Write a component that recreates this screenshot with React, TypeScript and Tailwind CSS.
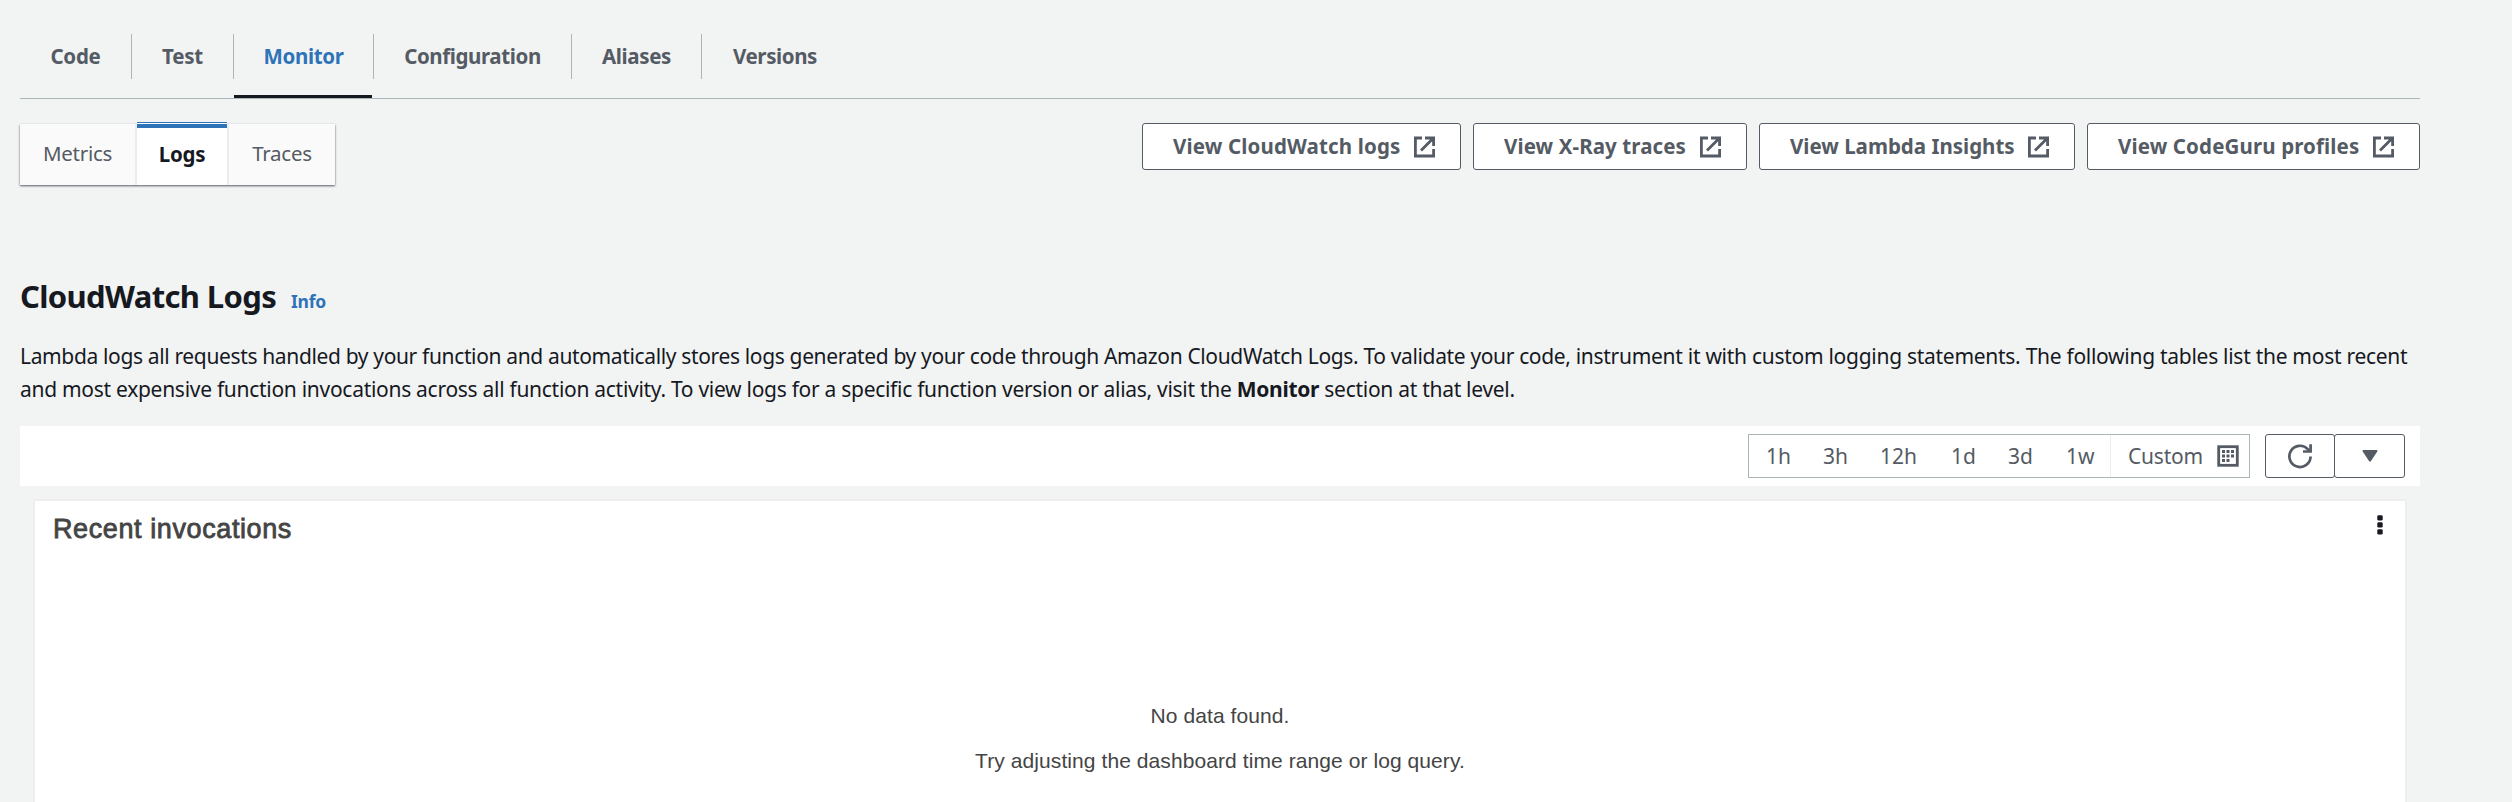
import React from "react";

const tabs = [
  { label: "Code", box: "w-[112px] tracking-[-0.25px]" },
  { label: "Test", box: "w-[102px] tracking-[-0.25px]" },
  { label: "Monitor", box: "w-[140px] tracking-[-0.35px]" },
  { label: "Configuration", box: "w-[198px] tracking-[-0.4px]" },
  { label: "Aliases", box: "w-[130px] tracking-[-0.35px]" },
  { label: "Versions", box: "w-[146px] tracking-[-0.4px]" },
];

const links = [
  { label: "View CloudWatch logs", box: "w-[319px] tracking-[0.15px]" },
  { label: "View X-Ray traces", box: "w-[274px] tracking-[0.1px]" },
  { label: "View Lambda Insights", box: "w-[316px]" },
  { label: "View CodeGuru profiles", box: "w-[333px] tracking-[0.13px]" },
];

const ranges = [
  { label: "1h", box: "w-[57px]" },
  { label: "3h", box: "w-[57px]" },
  { label: "12h", box: "w-[71px]" },
  { label: "1d", box: "w-[57px]" },
  { label: "3d", box: "w-[58px]" },
  { label: "1w", box: "w-[44px]" },
];

function ExternalIcon() {
  return (
    <svg className="h-[24px] w-[24px] shrink-0" viewBox="0 0 24 24" fill="none" stroke="#545b64" strokeWidth="2.8">
      <path d="M10 3H3.4V21H21.6V14" />
      <path d="M13 3H21.6V11M21 3.5L9 15.5" />
    </svg>
  );
}

function CalendarIcon() {
  return (
    <svg className="h-[22px] w-[22px]" viewBox="0 0 22 22" fill="none">
      <rect x="1.7" y="1.7" width="18.6" height="18.6" stroke="#545b64" strokeWidth="2.8" />
      <path d="M5 6.5h12M5 11h12M5 15.5h8" stroke="#545b64" strokeWidth="3" strokeDasharray="3 1.5" />
    </svg>
  );
}

function RefreshIcon() {
  return (
    <svg className="h-[26px] w-[26px]" viewBox="0 0 26 26" fill="none" stroke="#545b64" strokeWidth="2.7">
      <path d="M23.6 13.5A10.6 10.6 0 1 1 20.8 6.2L22.5 8.2" />
      <path d="M23.6 1.2V8.5H16" />
    </svg>
  );
}

export default function App() {
  return (
    <div className="h-[802px] w-[2512px] overflow-hidden bg-[#f2f3f3] pl-5 pr-[92px] font-['Noto_Sans','Open_Sans',sans-serif] text-[#16191f]">
      <nav className="flex h-[99px] border-b border-[#aab7b8] pt-[34px]">
        {tabs.map((t, i) => (
          <div key={t.label} className={`${t.box} flex h-[64px] flex-col justify-between`}>
            <div className={`flex h-[45px] items-center justify-center text-[20.5px] font-bold ${i < 5 ? "border-r border-[#aab7b8]" : ""} ${t.label === "Monitor" ? "text-[#2e73b8]" : "text-[#545b64]"}`}>
              {t.label}
            </div>
            {t.label === "Monitor" && <div className="h-[3px] w-[138px] bg-[#16191f]" />}
          </div>
        ))}
      </nav>
      <div className="flex h-[87px] items-start justify-between pt-6">
        <div className="mt-px flex h-[61px] w-[315px] bg-[#fafafa] text-[20.5px] tracking-[-0.25px] text-[#545b64] shadow-[0_1px_2px_#545b64]">
          <div className="flex w-[117px] items-center justify-center border-r-2 border-[#eaeded] pb-0.5">Metrics</div>
          <div className="-mt-0.5 flex h-[63px] w-[90px] flex-col border-t border-[#2e73b8] bg-white font-bold text-[#16191f]">
            <div className="mt-px h-1 bg-[#2e73b8]" />
            <div className="flex flex-1 items-center justify-center pb-[5px]">Logs</div>
          </div>
          <div className="flex w-[108px] items-center justify-center border-l-2 border-[#eaeded] pb-0.5">Traces</div>
        </div>
        <div className="flex gap-3">
          {links.map((l) => (
            <button key={l.label} className={`${l.box} flex h-[47px] items-center justify-between rounded-[3px] border border-[#545b64] bg-white pl-[30px] pr-[24px] text-[20.5px] font-bold text-[#545b64]`}>
              {l.label}
              <ExternalIcon />
            </button>
          ))}
        </div>
      </div>
      <div className="mt-[88px] flex h-[44px] items-baseline gap-[15px]">
        <h1 className="text-[31px] font-bold leading-[44px] tracking-[-0.64px]">CloudWatch Logs</h1>
        <a className="text-[17.5px] font-bold tracking-[-0.3px] text-[#2e73b8]">Info</a>
      </div>
      <p className="mt-[22px] h-[86px] whitespace-nowrap text-[21px] leading-[33px] tracking-[-0.328px]">
        <span className="tracking-[-0.355px]">
          Lambda logs all requests handled by your function and automatically stores logs generated by your code through Amazon CloudWatch Logs. To validate your code,
        </span>{" "}
        <span className="tracking-[-0.28px]">
          instrument it with custom logging statements. The following tables list the most recent
        </span>
        <br />
        <span className="tracking-[-0.285px]">
          and most expensive function invocations across all function activity. To view logs for a specific function version or alias, visit the <b>Monitor</b> section at that level.
        </span>
      </p>
      <div className="flex h-[60px] items-center justify-end bg-white pr-[15px] text-[21px] text-[#545b64]">
        <div className="flex h-[44px] w-[502px] border border-[#aab7b8]">
          <div className="flex w-[362px] items-center border-r border-[#eaeded] pl-[17px] pt-0.5">
            {ranges.map((r) => (
              <span key={r.label} className={r.box}>
                {r.label}
              </span>
            ))}
          </div>
          <div className="flex flex-1 items-center justify-between pl-[17px] pr-[10px]">
            <span className="pt-0.5 tracking-[-0.2px]">Custom</span>
            <CalendarIcon />
          </div>
        </div>
        <div className="ml-[15px] flex h-[44px]">
          <button className="flex w-[70px] items-center justify-center rounded-[3px] border border-[#545b64]">
            <RefreshIcon />
          </button>
          <button className="-ml-px flex w-[71px] items-center justify-center rounded-[3px] border border-[#545b64]">
            <svg className="h-[12px] w-[16px]" viewBox="0 0 16 12" fill="#545b64">
              <path d="M1.5 0H14.5Q16 0 15.3 1.6L9 11Q8 12.4 7 11L0.7 1.6Q0 0 1.5 0Z" />
            </svg>
          </button>
        </div>
      </div>
      <section className="mx-[15px] mt-[15px] h-[320px] bg-white font-['Liberation_Sans',Arial,sans-serif] text-[#444] shadow-[0_0_0_2px_#eeeeee]">
        <div className="flex h-[58px] items-start justify-between pl-[18px] pr-[22px]">
          <h2 className="pt-[12px] text-[27px] leading-[32px] tracking-[0.6px] [-webkit-text-stroke:0.8px_#444]">Recent invocations</h2>
          <svg className="mt-[14px] h-[20px] w-[6px]" viewBox="0 0 6 20" fill="#16191f">
            <rect x="0.3" y="0.3" width="5.4" height="5.2" rx="1.3" />
            <rect x="0.3" y="7.3" width="5.4" height="5.2" rx="1.3" />
            <rect x="0.3" y="14.3" width="5.4" height="5.2" rx="1.3" />
          </svg>
        </div>
        <div className="mt-[134px] text-center text-[21px] leading-[45px] tracking-[0.08px]">
          <p>No data found.</p>
          <p>Try adjusting the dashboard time range or log query.</p>
        </div>
      </section>
    </div>
  );
}
